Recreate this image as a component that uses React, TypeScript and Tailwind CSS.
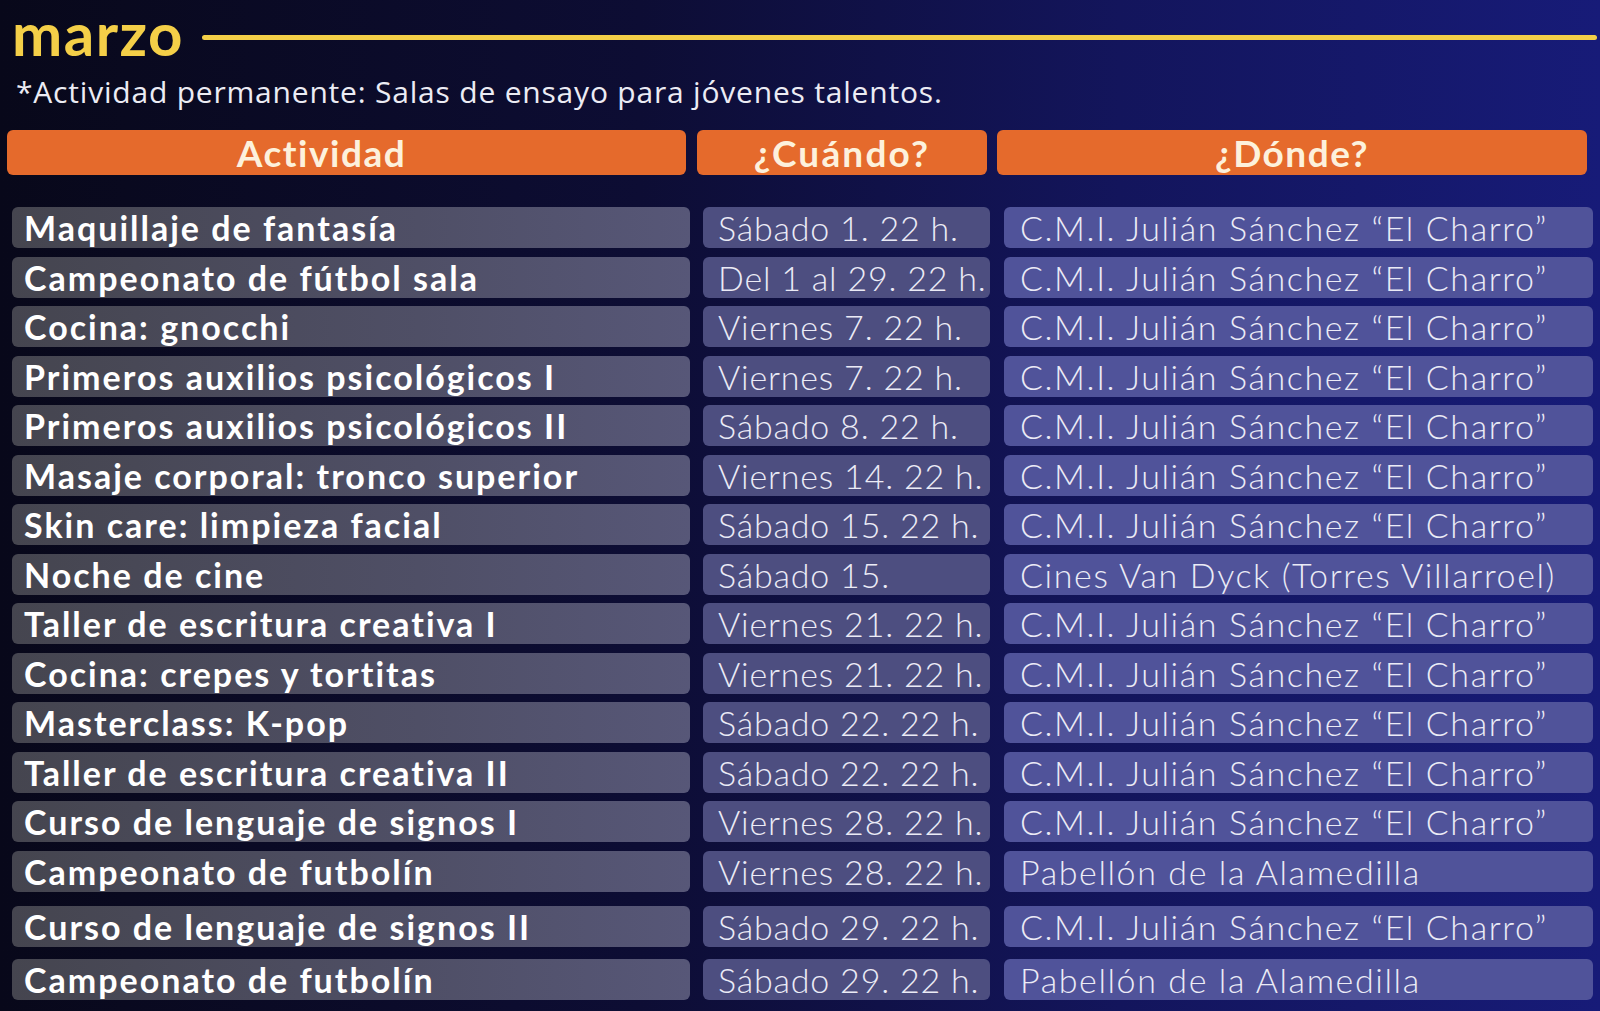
const charro = 'C.M.I. Julián Sánchez “El Charro”'

const rows: { act: string; when: string; where: string; extra?: string }[] = [
  { act: 'Maquillaje de fantasía', when: 'Sábado 1. 22 h.', where: charro },
  { act: 'Campeonato de fútbol sala', when: 'Del 1 al 29. 22 h.', where: charro },
  { act: 'Cocina: gnocchi', when: 'Viernes 7. 22 h.', where: charro },
  { act: 'Primeros auxilios psicológicos I', when: 'Viernes 7. 22 h.', where: charro },
  { act: 'Primeros auxilios psicológicos II', when: 'Sábado 8. 22 h.', where: charro },
  { act: 'Masaje corporal: tronco superior', when: 'Viernes 14. 22 h.', where: charro },
  { act: 'Skin care: limpieza facial', when: 'Sábado 15. 22 h.', where: charro },
  { act: 'Noche de cine', when: 'Sábado 15.', where: 'Cines Van Dyck (Torres Villarroel)' },
  { act: 'Taller de escritura creativa I', when: 'Viernes 21. 22 h.', where: charro },
  { act: 'Cocina: crepes y tortitas', when: 'Viernes 21. 22 h.', where: charro },
  { act: 'Masterclass: K-pop', when: 'Sábado 22. 22 h.', where: charro },
  { act: 'Taller de escritura creativa II', when: 'Sábado 22. 22 h.', where: charro },
  { act: 'Curso de lenguaje de signos I', when: 'Viernes 28. 22 h.', where: charro },
  { act: 'Campeonato de futbolín', when: 'Viernes 28. 22 h.', where: 'Pabellón de la Alamedilla' },
  { act: 'Curso de lenguaje de signos II', when: 'Sábado 29. 22 h.', where: charro, extra: 'mt-[6px]' },
  { act: 'Campeonato de futbolín', when: 'Sábado 29. 22 h.', where: 'Pabellón de la Alamedilla', extra: 'mt-[3px]' },
]

export default function App() {
  return (
    <main className="w-[1600px] h-[1011px] overflow-hidden bg-[linear-gradient(90deg,#08081a_0%,#0d0d34_40%,#13155c_70%,#171b78_100%)] font-['Lato','Open_Sans',sans-serif]">
      <div className="flex items-start pl-[12px]">
        <span className="text-[60px] font-bold leading-[66px] text-[#f4cf48] tracking-[1.5px]">marzo</span>
        <div className="flex-1 h-[5px] bg-[#f4cf48] ml-[18px] mr-[3px] mt-[35px] rounded-full" />
      </div>
      <p className="pl-[16px] mt-[8px] text-[30px] leading-[36px] tracking-[0.8px] text-[#ececf4] font-['Open_Sans',sans-serif]">
        *Actividad permanente: Salas de ensayo para jóvenes talentos.
      </p>

      <div className="flex pl-[7px] mt-[20px] gap-[12px] text-[37px] font-bold text-[#fdf1dc] tracking-[1.5px]">
        <div className="w-[679px] h-[45px] rounded-[6px] bg-[#e56a2c] flex items-center justify-center pr-[50px]">Actividad</div>
        <div className="w-[290px] h-[45px] rounded-[6px] bg-[#e56a2c] flex items-center justify-center -ml-[1px] tracking-[2.2px]">¿Cuándo?</div>
        <div className="w-[590px] h-[45px] rounded-[6px] bg-[#e56a2c] flex items-center justify-center -ml-[2px]">¿Dónde?</div>
      </div>

      <div className="flex flex-col gap-[8.5px] mt-[32px] pl-[12px]">
        {rows.map((r, i) => (
          <div key={i} className={`flex h-[41px] ${r.extra ?? ''}`}>
            <div className="w-[678px] rounded-[6px] bg-[linear-gradient(90deg,#45454f,#4f4f66_60%,#575778)] flex items-center pl-[12px] text-[34px] font-bold text-white tracking-[2px] whitespace-nowrap">
              {r.act}
            </div>
            <div className="w-[287px] ml-[13px] rounded-[6px] bg-[#4d4e80] flex items-center pl-[15px] text-[34px] font-light text-[#ebebf6] tracking-[0.8px] whitespace-nowrap">
              {r.when}
            </div>
            <div className="w-[589px] ml-[14px] rounded-[6px] bg-[#50539a] flex items-center pl-[16px] text-[34px] font-light text-[#ebebf6] tracking-[1.6px] whitespace-nowrap">
              {r.where}
            </div>
          </div>
        ))}
      </div>
    </main>
  )
}
